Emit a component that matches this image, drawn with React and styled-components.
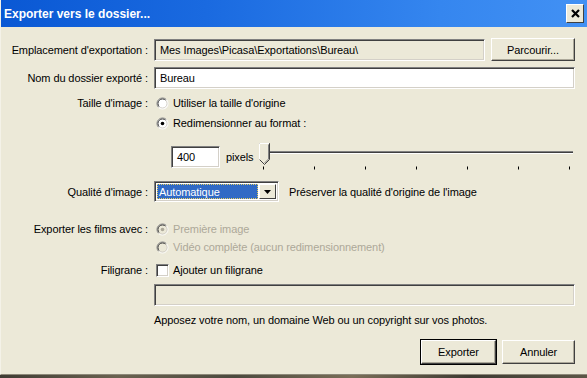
import React from "react";
import styled, { createGlobalStyle, css } from "styled-components";

const GlobalStyle = createGlobalStyle`
  html, body {
    margin: 0;
    padding: 0;
    background: #4e4a3c;
  }
  body {
    font-family: "Liberation Sans", Arial, sans-serif;
    font-size: 11px;
    letter-spacing: -0.1px;
    color: #000;
  }
`;

const Window = styled.div`
  width: 587px;
  height: 375px;
  background: #ece9d8;
  box-sizing: border-box;
  border-left: 1px solid #f4f2e8;
  border-bottom: 1px solid #8c8878;
  display: flex;
  flex-direction: column;
`;

const Desk = styled.div`
  height: 3px;
  background: linear-gradient(to right, #3f3c33, #6a6250 20%, #4c4a3e 40%, #7a6e58 60%, #3e3b32 80%, #5c5646);
`;

const TitleBar = styled.div`
  height: 27px;
  flex: none;
  display: flex;
  align-items: center;
  justify-content: space-between;
  padding: 0 3px 0 3px;
  background: linear-gradient(to right, #0a58d4 0%, #1a6ae0 35%, #3586ef 75%, #4291f4 100%);
`;

const Title = styled.div`
  color: #fff;
  font-weight: bold;
  font-size: 12px;
  letter-spacing: 0;
`;

const CloseBtn = styled.div`
  width: 18px;
  height: 19px;
  box-sizing: border-box;
  background: #ece9d8;
  border: 1px solid;
  border-color: #fff #404040 #404040 #fff;
  display: flex;
  align-items: center;
  justify-content: center;
`;

const Body = styled.div`
  flex: 1;
  padding: 11px 12px 0 0;
  display: flex;
  flex-direction: column;
`;

const Row = styled.div`
  display: grid;
  grid-template-columns: 147px 1fr;
  column-gap: 6px;
  align-items: center;
  height: ${(p) => p.$h || 18}px;
  margin-top: ${(p) => p.$mt || 0}px;
`;

const Label = styled.div`
  text-align: right;
  white-space: nowrap;
`;

const Cell = styled.div`
  display: flex;
  align-items: center;
  gap: ${(p) => p.$gap || 0}px;
  padding-left: ${(p) => p.$indent || 0}px;
  min-width: 0;
`;

const sunken = css`
  box-sizing: border-box;
  border: 1px solid;
  border-color: #808080 #fff #fff #808080;
  box-shadow: inset 1px 1px #404040, inset -1px -1px #d4d0c8;
`;

const TextBox = styled.div`
  ${sunken};
  height: 22px;
  flex: ${(p) => (p.$w ? "none" : 1)};
  width: ${(p) => (p.$w ? `${p.$w}px` : "auto")};
  background: ${(p) => (p.$disabled ? "#ece9d8" : "#fff")};
  padding: 0 5px;
  display: flex;
  align-items: center;
  white-space: nowrap;
  overflow: hidden;
`;

const Button = styled.div`
  box-sizing: border-box;
  width: ${(p) => p.$w}px;
  height: ${(p) => p.$h || 23}px;
  flex: none;
  background: #ece9d8;
  border: 1px solid;
  border-color: #fff #404040 #404040 #fff;
  box-shadow: inset -1px -1px #aca899;
  display: flex;
  align-items: center;
  justify-content: center;
  ${(p) =>
    p.$default &&
    css`
      outline: 1px solid #000;
    `}
`;

const Option = styled.div`
  display: flex;
  align-items: center;
  gap: 4px;
  margin-left: 2px;
  color: ${(p) => (p.$disabled ? "#aca899" : "#000")};
  white-space: nowrap;
`;

const CheckBox = styled.div`
  ${sunken};
  width: 13px;
  height: 13px;
  background: #fff;
  flex: none;
`;

const Select = styled.div`
  ${sunken};
  width: 125px;
  height: 21px;
  background: #fff;
  display: flex;
  align-items: center;
  padding: 2px;
  gap: 1px;
`;

const Selected = styled.div`
  flex: 1;
  height: 100%;
  box-sizing: border-box;
  background: #316ac5;
  color: #fff;
  border: 1px dotted #e8d060;
  display: flex;
  align-items: center;
  padding-left: 1px;
`;

const DropBtn = styled.div`
  width: 17px;
  height: 100%;
  box-sizing: border-box;
  background: #ece9d8;
  border: 1px solid;
  border-color: #fff #404040 #404040 #fff;
  display: flex;
  align-items: center;
  justify-content: center;
`;

const Hint = styled.div`
  margin-left: ${(p) => p.$ml ?? 10}px;
  white-space: nowrap;
`;

const SliderSvg = styled.svg`
  flex: none;
  align-self: flex-start;
  margin-left: auto;
`;

const Footer = styled.div`
  display: flex;
  justify-content: flex-end;
  gap: 6px;
  margin-top: 12px;
`;

function Radio({ checked, disabled }) {
  return (
    <svg width="13" height="13" viewBox="0 0 13 13" style={{ flex: "none" }}>
      <circle cx="6.5" cy="6.5" r="5.5" fill={disabled ? "#ece9d8" : "#fff"} />
      <path d="M2.6 10.4 A5.5 5.5 0 0 1 10.4 2.6" fill="none" stroke="#808080" strokeWidth="1" />
      <path d="M3.3 9.7 A4.5 4.5 0 0 1 9.7 3.3" fill="none" stroke="#404040" strokeWidth="1" />
      <path d="M10.4 2.6 A5.5 5.5 0 0 1 2.6 10.4" fill="none" stroke="#fff" strokeWidth="1" />
      <path d="M9.7 3.3 A4.5 4.5 0 0 1 3.3 9.7" fill="none" stroke="#d4d0c8" strokeWidth="1" />
      {checked && <circle cx="6.5" cy="6.5" r="1.8" fill={disabled ? "#aca899" : "#000"} />}
    </svg>
  );
}

function Slider() {
  const ticks = [6, 57, 108, 159, 210, 261, 312];
  return (
    <SliderSvg width="318" height="28" viewBox="0 0 318 28">
      <line x1="2" y1="8.5" x2="316" y2="8.5" stroke="#808080" />
      <line x1="2" y1="9.5" x2="316" y2="9.5" stroke="#404040" />
      <line x1="2" y1="10.5" x2="316" y2="10.5" stroke="#fff" />
      <path d="M2.5 0.5 H12.5 V16.5 L7.5 21.5 L2.5 16.5 Z" fill="#ece9d8" stroke="#404040" />
      <path d="M2.5 16.5 V0.5 H12" fill="none" stroke="#fff" />
      <path d="M11.5 1.5 V16 L7.5 20" fill="none" stroke="#808080" />
      {ticks.map((x) => (
        <line key={x} x1={x + 0.5} y1="23.5" x2={x + 0.5} y2="26.5" stroke="#000" />
      ))}
    </SliderSvg>
  );
}

export default function App() {
  return (
    <>
      <GlobalStyle />
      <Window>
        <TitleBar>
          <Title>Exporter vers le dossier...</Title>
          <CloseBtn>
            <svg width="9" height="9" viewBox="0 0 9 9">
              <path d="M1 1 L8 8 M8 1 L1 8" stroke="#000" strokeWidth="2.2" />
            </svg>
          </CloseBtn>
        </TitleBar>
        <Body>
          <Row $h={22}>
            <Label>Emplacement d'exportation :</Label>
            <Cell $gap={6}>
              <TextBox $disabled>Mes Images\Picasa\Exportations\Bureau\</TextBox>
              <Button $w={84}>Parcourir...</Button>
            </Cell>
          </Row>
          <Row $h={22} $mt={7}>
            <Label>Nom du dossier exporté :</Label>
            <Cell>
              <TextBox>Bureau</TextBox>
            </Cell>
          </Row>
          <Row $mt={5}>
            <Label>Taille d'image :</Label>
            <Cell>
              <Option>
                <Radio />
                Utiliser la taille d'origine
              </Option>
            </Cell>
          </Row>
          <Row $mt={2}>
            <Label />
            <Cell>
              <Option>
                <Radio checked />
                Redimensionner au format :
              </Option>
            </Cell>
          </Row>
          <Row $h={22} $mt={11}>
            <Label />
            <Cell $indent={17}>
              <TextBox $w={49}>400</TextBox>
              <Hint $ml={6}>pixels</Hint>
              <Slider />
            </Cell>
          </Row>
          <Row $h={20} $mt={16}>
            <Label>Qualité d'image :</Label>
            <Cell>
              <Select>
                <Selected>Automatique</Selected>
                <DropBtn>
                  <svg width="7" height="4" viewBox="0 0 7 4">
                    <path d="M0 0 H7 L3.5 4 Z" fill="#000" />
                  </svg>
                </DropBtn>
              </Select>
              <Hint>Préserver la qualité d'origine de l'image</Hint>
            </Cell>
          </Row>
          <Row $mt={19}>
            <Label>Exporter les films avec :</Label>
            <Cell>
              <Option $disabled>
                <Radio checked disabled />
                Première image
              </Option>
            </Cell>
          </Row>
          <Row>
            <Label />
            <Cell>
              <Option $disabled>
                <Radio disabled />
                Vidéo complète (aucun redimensionnement)
              </Option>
            </Cell>
          </Row>
          <Row $mt={5}>
            <Label>Filigrane :</Label>
            <Cell>
              <Option>
                <CheckBox />
                Ajouter un filigrane
              </Option>
            </Cell>
          </Row>
          <Row $h={22} $mt={5}>
            <Label />
            <Cell>
              <TextBox $disabled />
            </Cell>
          </Row>
          <Row $h={16} $mt={6}>
            <Label />
            <Cell>Apposez votre nom, un domaine Web ou un copyright sur vos photos.</Cell>
          </Row>
          <Footer>
            <Button $w={75} $h={24} $default>
              Exporter
            </Button>
            <Button $w={73} $h={24}>
              Annuler
            </Button>
          </Footer>
        </Body>
      </Window>
      <Desk />
    </>
  );
}
